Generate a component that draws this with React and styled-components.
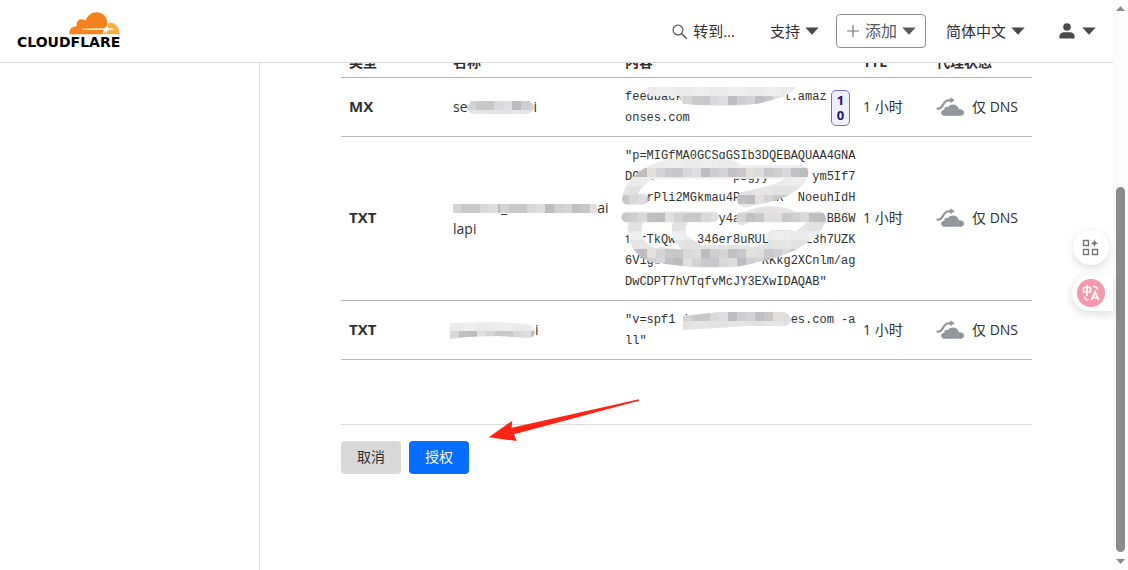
import React from 'react';
import styled, { createGlobalStyle } from 'styled-components';

const GlobalStyle = createGlobalStyle`
  * { box-sizing: border-box; }
  body {
    margin: 0;
    background: #fff;
    color: #313131;
    font: 14px/21px "Open Sans", "Noto Sans CJK SC", sans-serif;
  }
  button { font: inherit; cursor: pointer; }
`;

const Shell = styled.div`
  display: flex;
  height: 100vh;
  overflow: hidden;
`;

const Page = styled.div`
  flex: 1;
  min-width: 0;
  display: flex;
  flex-direction: column;
`;

const Header = styled.header`
  display: flex;
  align-items: center;
  justify-content: space-between;
  height: 63px;
  flex: none;
  padding: 0 17px;
  border-bottom: 1px solid #d9d9d9;
  background: #fff;
`;

const Brand = styled.a`
  display: flex;
  flex-direction: column;
  align-items: flex-end;
  padding-bottom: 2px;
  color: #000;
  font: bold 14px/14px "DejaVu Sans", sans-serif;
  text-decoration: none;
`;

const Nav = styled.nav`
  display: flex;
  align-items: center;
`;

const NavButton = styled.button`
  display: flex;
  align-items: center;
  gap: ${(p) => p.$gap || 5}px;
  height: 34px;
  margin-left: ${(p) => p.$space || 0}px;
  padding: 0 ${(p) => (p.$boxed ? 9 : 0)}px;
  border: ${(p) => (p.$boxed ? '1px solid #8d8d8d' : '0')};
  border-radius: 4px;
  background: none;
  color: ${(p) => (p.$boxed ? '#595959' : '#313131')};
  font-size: ${(p) => (p.$boxed ? 16 : 15)}px;
  white-space: nowrap;
`;

const Body = styled.div`
  flex: 1;
  min-height: 0;
  display: flex;
`;

const Sidebar = styled.aside`
  width: 260px;
  flex: none;
  border-right: 1px solid #d9d9d9;
`;

const Main = styled.main`
  flex: 1;
  min-width: 0;
  padding: 0 81px;
  overflow: hidden;
`;

const Records = styled.table`
  width: 100%;
  margin-top: -17px;
  border-collapse: separate;
  border-spacing: 0;
  table-layout: fixed;

  th, td {
    padding: 7px 0 9px 8px;
    border-bottom: 1px solid #b6b6b6;
    text-align: left;
    vertical-align: middle;
  }
  th { font-size: 15px; }
  thead th { padding: 5px 8px; font-size: 14px; }
`;

const ContentCell = styled.td`
  && { padding: 9px 5px 7px 8px; }
`;

const Col = styled.col`
  width: ${(p) => p.$width}px;
`;

const Value = styled.div`
  position: relative;
  display: flex;
  align-items: center;
  justify-content: space-between;
  font: 12px/21px "Liberation Mono", monospace;
  white-space: pre;
`;

const Priority = styled.span`
  flex: none;
  width: 19px;
  margin: -4px 0;
  padding: 2px 4px;
  border: 1px solid #7a6cc8;
  border-radius: 5px;
  background: #f0eefc;
  color: #1d1472;
  font: bold 13px/15px "Open Sans", sans-serif;
  text-align: center;
  white-space: normal;
  word-break: break-all;
`;

const Proxy = styled.div`
  display: flex;
  align-items: center;
  gap: 8px;
  white-space: nowrap;
`;

const InlineSmear = styled.svg`
  margin-left: ${(p) => p.$pull || 0}px;
  vertical-align: ${(p) => p.$drop || 0}px;
`;

const OverSmear = styled.svg`
  position: absolute;
  left: ${(p) => p.$left}px;
  top: ${(p) => p.$top}px;
`;

const Footer = styled.footer`
  position: relative;
  display: flex;
  gap: 8px;
  margin-top: 64px;
  padding-top: 16px;
  border-top: 1px solid #d9d9d9;
`;

const Action = styled.button`
  height: 33px;
  padding: 0 16px 2px;
  border: 0;
  border-radius: 4px;
  background: ${(p) => (p.$primary ? '#056dff' : '#d9d9d9')};
  color: ${(p) => (p.$primary ? '#fff' : '#313131')};
`;

const Pointer = styled.svg`
  position: absolute;
  left: 147px;
  top: -26px;
`;

const ScrollTrack = styled.div`
  flex: none;
  display: flex;
  flex-direction: column;
  align-items: center;
  width: 15px;
  padding: 6px 0;
  background: #fcfcfc;
`;

const ScrollSpace = styled.div`
  flex: ${(p) => p.$share};
`;

const ScrollThumb = styled.div`
  flex: 364;
  width: 9px;
  margin-bottom: 7px;
  border-radius: 5px;
  background: #8b8b8b;
`;

const Tools = styled.div`
  position: fixed;
  right: 15px;
  top: 230px;
  display: flex;
  flex-direction: column;
  align-items: flex-start;
  gap: 10px;
`;

const ToolButton = styled.button`
  display: flex;
  align-items: center;
  width: ${(p) => (p.$tab ? 41 : 36)}px;
  height: ${(p) => (p.$tab ? 36 : 35)}px;
  padding: 0 0 0 ${(p) => (p.$tab ? 5 : 9)}px;
  border: 0;
  border-radius: ${(p) => (p.$tab ? '18px 0 0 18px' : '18px')};
  margin-left: ${(p) => (p.$tab ? 0 : 1)}px;
  background: #fff;
  box-shadow: 0 3px 10px rgba(0, 0, 0, 0.14);
`;

const Caret = ({ color = '#4a4a4a' }) => (
  <svg width="14" height="8" viewBox="0 0 14 8" aria-hidden="true">
    <path d="M0.3 0.5h13.4L7 7.8z" fill={color} />
  </svg>
);

const CloudLogo = () => (
  <svg width="51" height="23" viewBox="215 34 153 69" aria-hidden="true">
    <path
      fill="#f6821f"
      d="M216 101c-1-14 8-24 22-24-2-12 4-21 15-21 5 0 9 2 12 4 5-15 18-25 33-25 18 0 31 13 32 31 0 6-1 12-3 17l-72 1c-2 0-2 3 0 3l64 1c-2 5-3 9-2 13z"
    />
    <path
      fill="#fbad41"
      d="M334 67c19-4 33 13 32 34h-46c1-8 4-12 10-13l20-1c2 0 2-3 0-3l-17-1c-3-3-1-12 1-16z"
    />
    <path fill="#fff" d="M327 74c1 9 4 11 13 13-9 2-12 4-13 13-2-9-5-11-13-13 8-2 11-4 13-13z" />
  </svg>
);

const SearchIcon = () => (
  <svg width="16" height="16" viewBox="0 0 16 16" fill="none" stroke="#595959" aria-hidden="true">
    <circle cx="6" cy="7" r="4.9" strokeWidth="1.2" />
    <path d="M9.6 10.6l5.2 5.2" strokeWidth="1.5" />
  </svg>
);

const PlusIcon = () => (
  <svg width="14" height="14" viewBox="0 0 14 14" stroke="#777" strokeWidth="1.2" aria-hidden="true">
    <path d="M7 1v12M1 7h12" />
  </svg>
);

const UserIcon = () => (
  <svg width="16" height="16" viewBox="0 0 16 16" fill="#4a4a4a" aria-hidden="true">
    <circle cx="8" cy="4" r="3.8" />
    <path d="M0.4 15.6v-2.2c0-2.6 2.4-4.2 4.9-4.2h5.4c2.5 0 4.9 1.6 4.9 4.2v2.2z" />
  </svg>
);

const DnsOnlyIcon = () => (
  <svg width="28" height="19" viewBox="258 52 84 57" aria-hidden="true">
    <path d="M260 87h5c15 0 13-23 29-25h9" fill="none" stroke="#92979b" strokeWidth="7" />
    <path d="M301 53l13 9-13 9z" fill="#92979b" />
    <path
      fill="#92979b"
      stroke="#fff"
      strokeWidth="3"
      paintOrder="stroke"
      d="M283 108c-13 0-13-18 0-18-2-7 6-11 12-8 7-12 29-9 32 7 8-2 15 3 15 10 0 5-4 9-9 9z"
    />
  </svg>
);

const AppsIcon = () => (
  <svg width="17" height="17" viewBox="0 0 17 17" fill="none" stroke="#777" strokeWidth="1.4" aria-hidden="true">
    <path d="M1.5 1.5h5v5h-5zM1.5 10.5h5v5h-5zM10.5 10.5h5v5h-5z" />
    <path
      d="M12.5 0c.6 2.900 1.200 3.500 4.200 4.200-3 .7-3.600 1.300-4.200 4.200-.6-2.900-1.200-3.500-4.200-4.200 3-.7 3.600-1.300 4.200-4.200z"
      fill="#777"
      stroke="none"
    />
  </svg>
);

const TranslateIcon = () => (
  <svg width="28" height="28" viewBox="0 0 28 28" fill="none" stroke="#fff" strokeWidth="1.6" aria-hidden="true">
    <circle cx="14" cy="14" r="14" fill="#f598ae" stroke="none" />
    <path d="M6.5 8.500h7v4.500h-7zM10 6v11" />
    <path d="M14.500 21l3.500-8 3.700 8M15.700 18.700h4.800" strokeWidth="1.800" />
    <path d="M16 7.500c2.800-.3 4.300.5 4.600 3M7.500 17.500c.2 2.500 1.500 3.500 4 3.300" strokeWidth="1.500" />
  </svg>
);

const TONES = ['#d4d4d6', '#c8c8ca', '#dedee0', '#cfcfd1', '#c1c1c4', '#e3e0dc', '#c9c9cc', '#d9d9db', '#bdbdc0'];
const PALE = ['#ebebeb', '#e5e5e5', '#eeeeee', '#e2e2e2'];

function blocks(width, height, size, darkRow) {
  const cells = [];
  for (let r = 0; r * size < height; r += 1) {
    for (let c = 0; c * size < width; c += 1) {
      const set = darkRow(r) ? TONES : PALE;
      cells.push(
        <rect
          key={`${r}-${c}`}
          x={c * size}
          y={r * size}
          width={size}
          height={size}
          fill={set[(c * 5 + r * 7 + ((c * c) % 4)) % set.length]}
          shapeRendering="crispEdges"
        />
      );
    }
  }
  return cells;
}

const NameSmear = ({ id, width, height, shape, pull, drop, dark }) => (
  <InlineSmear width={width} height={height} $pull={pull} $drop={drop} aria-hidden="true">
    <clipPath id={id}><path d={shape} /></clipPath>
    <g clipPath={`url(#${id})`}>{blocks(width, height, 9, dark)}</g>
  </InlineSmear>
);

const FeedbackSmear = () => (
  <OverSmear $left={22} $top={0} width="149" height="19" aria-hidden="true">
    <clipPath id="feedback"><path d="M0 0h149c-5 9-22 13-40 17-24 3-50 2-73 0l-4-8H2z" /></clipPath>
    <g clipPath="url(#feedback)">{blocks(149, 19, 9, (r) => r === 1)}</g>
  </OverSmear>
);

const SpfSmear = () => (
  <OverSmear $left={58} $top={2} width="109" height="18" aria-hidden="true">
    <clipPath id="spf"><path d="M0 4l36-4h64q8 2 8 8-1 6-8 6H62l-26 2-36 2z" /></clipPath>
    <g clipPath="url(#spf)">{blocks(109, 18, 9, (r) => r === 0)}</g>
  </OverSmear>
);

const KeySmear = () => (
  <OverSmear $left={-5} $top={9} width="207" height="117" viewBox="30 45 621 351" aria-hidden="true">
    <mask id="key" maskUnits="userSpaceOnUse" x="30" y="45" width="621" height="351">
      <g fill="none" stroke="#fff" strokeWidth="42" strokeLinecap="round">
        <path d="M58 175C65 125 120 90 180 78C250 64 330 68 375 86" />
        <path d="M140 96H575" strokeWidth="40" />
        <path d="M570 105C545 150 470 165 405 178" strokeWidth="48" />
        <path d="M52 178H100" strokeWidth="32" />
        <path d="M50 231H310M395 231H628" strokeWidth="32" />
        <path d="M624 238C600 290 515 330 440 342C370 368 260 362 150 345" strokeWidth="48" />
        <path d="M78 240C65 300 90 335 140 350" />
        <path d="M215 235C190 290 220 310 260 330" />
        <path d="M395 240C440 210 500 210 540 225" strokeWidth="32" />
        <path d="M490 290H540M230 335H410" strokeWidth="40" />
      </g>
    </mask>
    <g mask="url(#key)">
      <g transform="translate(30 57)">{blocks(621, 340, 27, (r) => [1, 4, 6, 10, 11].includes(r))}</g>
    </g>
  </OverSmear>
);

const RECORDS = [
  {
    type: 'MX',
    name: (
      <>
        se
        <NameSmear id="n1" width={67} height={14} pull={-1} drop={-3} dark={(r) => r === 0}
          shape="M4 0h57q6 1 6 7-2 7-10 6H8Q0 12 0 6z" />
        i
      </>
    ),
    value: 'feedback              l.amaz\nonses.com',
    smear: <FeedbackSmear />,
    priority: '10',
  },
  {
    type: 'TXT',
    name: (
      <>
        <NameSmear id="n2" width={48} height={9} dark={() => true} shape="M0 0h48v9H0z" />
        _
        <NameSmear id="n3" width={97} height={9} pull={-7} dark={() => true} shape="M0 0h97v9H0z" />
        ai
        <br />
        lapi
      </>
    ),
    value: [
      '"p=MIGfMA0GCSqGSIb3DQEBAQUAA4GNA',
      'DCBi           pSgyy    d ym5If7',
      '   rPli2MGkmau4PS   dX  NoeuhIdH',
      '             y4a            BB6W',
      'f rTkQwP  346er8uRULl    Z3h7UZK',
      '6V1gUvh0d          RKkg2XCnlm/ag',
      'DwCDPT7hVTqfvMcJY3EXwIDAQAB"',
    ].join('\n'),
    smear: <KeySmear />,
  },
  {
    type: 'TXT',
    name: (
      <>
        <NameSmear id="n4" width={85} height={17} pull={-3} drop={-4} dark={(r) => r === 1}
          shape="M0 1l45-1 33 2q7 2 7 8-1 6-8 6l-30-2-30 1-17 2z" />
        i
      </>
    ),
    value: '"v=spf1 i              es.com -a\nll"',
    smear: <SpfSmear />,
  },
];

export default function App() {
  return (
    <>
      <GlobalStyle />
      <Shell>
        <Page>
          <Header>
            <Brand href="#">
              <CloudLogo />
              CLOUDFLARE
            </Brand>
            <Nav>
              <NavButton><SearchIcon />转到...</NavButton>
              <NavButton $space={35}>支持<Caret /></NavButton>
              <NavButton $space={17} $boxed><PlusIcon />添加<Caret color="#595959" /></NavButton>
              <NavButton $space={20}>简体中文<Caret /></NavButton>
              <NavButton $space={34} $gap={7} aria-label="账户"><UserIcon /><Caret /></NavButton>
            </Nav>
          </Header>
          <Body>
            <Sidebar />
            <Main>
              <Records>
                <colgroup>
                  <Col $width={104} />
                  <Col $width={172} />
                  <col />
                  <Col $width={73} />
                  <Col $width={104} />
                </colgroup>
                <thead>
                  <tr>
                    <th scope="col">类型</th>
                    <th scope="col">名称</th>
                    <th scope="col">内容</th>
                    <th scope="col">TTL</th>
                    <th scope="col">代理状态</th>
                  </tr>
                </thead>
                <tbody>
                  {RECORDS.map((record, i) => (
                    <tr key={i}>
                      <th scope="row">{record.type}</th>
                      <td>{record.name}</td>
                      <ContentCell>
                        <Value>
                          {record.value}
                          {record.priority && <Priority>{record.priority}</Priority>}
                          {record.smear}
                        </Value>
                      </ContentCell>
                      <td>1 小时</td>
                      <td><Proxy><DnsOnlyIcon />仅 DNS</Proxy></td>
                    </tr>
                  ))}
                </tbody>
              </Records>
              <Footer>
                <Action type="button">取消</Action>
                <Action type="button" $primary>授权</Action>
                <Pointer width="153" height="44" viewBox="474 25 459 132" aria-hidden="true">
                  <path d="M476 140l71-50-2 21 382-85v4L552 131l8 20z" fill="#ff2414" />
                </Pointer>
              </Footer>
            </Main>
          </Body>
        </Page>
        <ScrollTrack aria-hidden="true">
          <svg width="9" height="5" viewBox="0 0 9 5"><path d="M0 5h9L4.500 0z" fill="#8b8b8b" /></svg>
          <ScrollSpace $share={176} />
          <ScrollThumb />
          <svg width="9" height="5" viewBox="0 0 9 5"><path d="M0 0h9L4.500 5z" fill="#8b8b8b" /></svg>
        </ScrollTrack>
      </Shell>
      <Tools>
        <ToolButton type="button" aria-label="应用"><AppsIcon /></ToolButton>
        <ToolButton type="button" $tab aria-label="翻译"><TranslateIcon /></ToolButton>
      </Tools>
    </>
  );
}
